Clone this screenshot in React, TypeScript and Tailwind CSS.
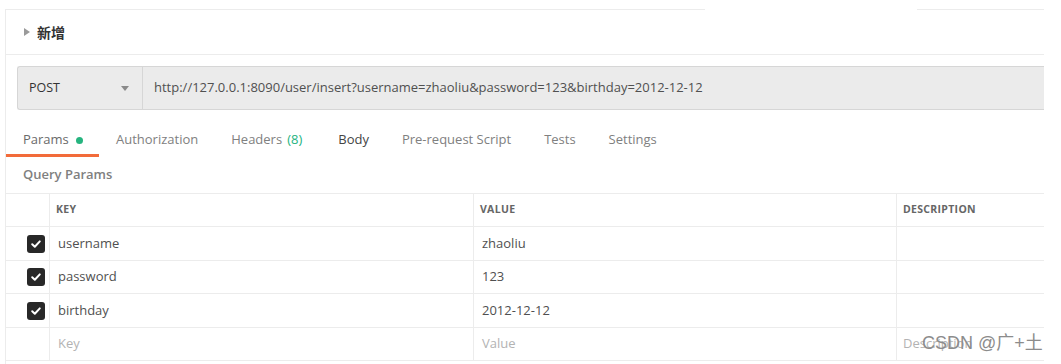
import React from 'react'

const rows = [
  { key: 'username', value: 'zhaoliu', h: 'h-[34px]' },
  { key: 'password', value: '123', h: 'h-[33px]' },
  { key: 'birthday', value: '2012-12-12', h: 'h-[34px]' },
]

function Check() {
  return (
    <div className="flex h-[18px] w-[18px] items-center justify-center rounded-[3px] bg-[#282828]">
      <svg width="12" height="12" viewBox="0 0 12 12">
        <path d="M2.2 6.2 L4.8 8.7 L9.8 3.4" fill="none" stroke="#fff" strokeWidth="2" strokeLinecap="round" strokeLinejoin="round" />
      </svg>
    </div>
  )
}

export default function App() {
  const tabs = ['Authorization', 'Headers', 'Body', 'Pre-request Script', 'Tests', 'Settings']

  return (
    <div
      className="relative h-[364px] w-[1061px] overflow-hidden bg-white"
      style={{ fontFamily: '"Open Sans", "Noto Sans CJK SC", sans-serif' }}
    >
      {/* stray top edge */}
      <div className="flex h-[10px] items-end">
        <div className="ml-[5px] h-[1px] w-[700px] bg-[#ececec]" />
        <div className="ml-[212px] h-[1px] w-[127px] bg-[#ececec]" />
      </div>

      <div className="ml-[5px] h-[354px] w-[1039px] border-l border-[#ececec]">
        {/* request name */}
        <div className="flex h-[45px] items-center border-b border-[#ececec] pl-[18px]">
          <svg width="6" height="8" viewBox="0 0 6 8" className="mr-[7px]">
            <polygon points="0,0 6,4 0,8" fill="#9a9a9a" />
          </svg>
          <span className="text-[14px] font-semibold text-[#333]">新增</span>
        </div>

        {/* url bar */}
        <div className="ml-[11px] mt-[11px] flex h-[44px] rounded-l-[3px] border border-r-0 border-[#d6d6d6] bg-[#ebebeb]">
          <div className="flex w-[125px] items-center justify-between border-r border-[#d6d6d6] pl-[11px] pr-[13px]">
            <span className="text-[12.5px] text-[#333]">POST</span>
            <svg width="8" height="5" viewBox="0 0 8 5">
              <polygon points="0,0 8,0 4,5" fill="#8a8a8a" />
            </svg>
          </div>
          <div className="flex items-center pl-[11px] text-[13px] text-[#505050]">
            http://127.0.0.1:8090/user/insert?username=zhaoliu&amp;password=123&amp;birthday=2012-12-12
          </div>
        </div>

        {/* tabs */}
        <div className="mt-[14px] flex h-[33px] items-stretch text-[13px] text-[#808080]">
          <div className="flex w-[93px] items-center border-b-[3px] border-[#f26b3a] pl-[17px] pt-[2px] text-[#6a6a6a]">
            Params
            <span className="ml-[7px] h-[7px] w-[7px] rounded-full bg-[#26b47f]" />
          </div>
          <div className="ml-[17px] flex gap-[33px] pb-[3px]">
            {tabs.map((t) => (
              <div key={t} className={'flex items-center pt-[2px] ' + (t === 'Body' ? 'ml-[3px] text-[#444]' : '')}>
                {t}
                {t === 'Headers' && <span className="ml-[5px] text-[#26b47f]">(8)</span>}
              </div>
            ))}
          </div>
        </div>

        <div className="flex h-[36px] items-center pl-[17px] text-[13px] font-semibold text-[#808080]">
          Query Params
        </div>

        {/* params table */}
        <div className="border-t border-[#ececec]">
          <div className="flex h-[33px] border-b border-[#ececec] text-[10.5px] font-bold tracking-[0.3px] text-[#666]">
            <div className="w-[44px] border-r border-[#ececec]" />
            <div className="flex w-[424px] items-center border-r border-[#ececec] pl-[6px]">KEY</div>
            <div className="flex w-[423px] items-center border-r border-[#ececec] pl-[6px]">VALUE</div>
            <div className="flex flex-1 items-center pl-[6px]">DESCRIPTION</div>
          </div>
          {rows.map((r) => (
            <div key={r.key} className={'flex border-b border-[#ececec] text-[13px] text-[#505050] ' + r.h}>
              <div className="flex w-[44px] items-center border-r border-[#ececec] pl-[21px]">
                <Check />
              </div>
              <div className="flex w-[424px] items-center border-r border-[#ececec] pl-[8px]">{r.key}</div>
              <div className="flex w-[423px] items-center border-r border-[#ececec] pl-[8px]">{r.value}</div>
              <div className="flex-1" />
            </div>
          ))}
          <div className="flex h-[33px] border-b border-[#ececec] text-[13px] text-[#b3b3b3]">
            <div className="w-[44px] border-r border-[#ececec]" />
            <div className="flex w-[424px] items-center border-r border-[#ececec] pl-[8px]">Key</div>
            <div className="flex w-[423px] items-center border-r border-[#ececec] pl-[8px]">Value</div>
            <div className="flex flex-1 items-center pl-[6px]">Description</div>
          </div>
        </div>
      </div>

      {/* watermark */}
      <div
        className="absolute left-[922px] top-[331px] text-[18px] leading-[24px] text-[#8c8c8c]"
        style={{ fontFamily: '"Liberation Sans", "Noto Sans CJK SC", sans-serif' }}
      >
        CSDN @广+土
      </div>
    </div>
  )
}
